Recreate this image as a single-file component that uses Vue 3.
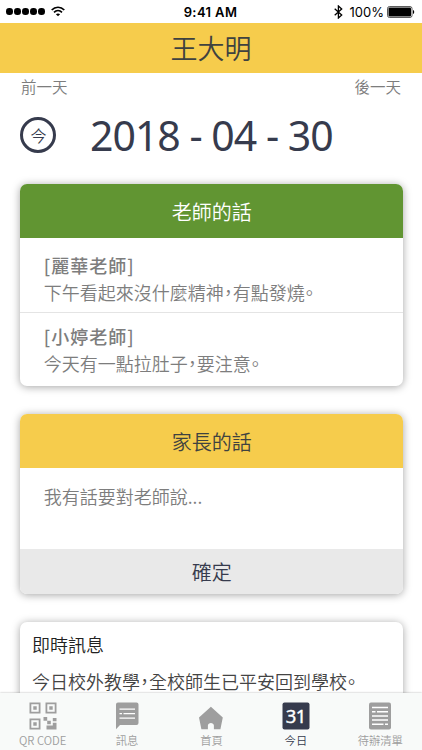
<script setup>
import { ref } from 'vue'

const aluno = '王大明'
const hoje = ref('2018 - 04 - 30')
const mensagem = ref('')
const abaAtiva = ref('today')

const recados = [
  { id: 1, autor: '[麗華老師]', texto: '下午看起來沒什麼精神\uFF0C有點發燒。' },
  { id: 2, autor: '[小婷老師]', texto: '今天有一點拉肚子\uFF0C要注意。' }
]

const noticia = '今日校外教學\uFF0C全校師生已平安回到學校。'

const abas = [
  { id: 'qr', nome: 'QR CODE' },
  { id: 'message', nome: '訊息' },
  { id: 'home', nome: '首頁' },
  { id: 'today', nome: '今日' },
  { id: 'todo', nome: '待辦清單' }
]
</script>

<template>
  <div class="app">
    <div class="status">
      <div class="sinal">
        <i v-for="n in 5" :key="n" class="ponto"></i>
        <svg class="wifi" width="14" height="11" viewBox="0 0 14 11" fill="none" stroke="#000" stroke-width="1.7">
          <path d="M.7 4C4.2.3 9.8.3 13.3 4" />
          <path d="M3 6.3c2.3-2.2 5.7-2.2 8 0" />
          <path d="M7 10.3 4.9 8.2c1.2-1.1 3-1.1 4.2 0Z" fill="#000" stroke="none" />
        </svg>
      </div>
      <span class="hora">9:41 AM</span>
      <div class="bateria">
        <svg class="bluetooth" width="9" height="14" viewBox="0 0 9 14" fill="none" stroke="#000" stroke-width="1.3">
          <path d="M.7 3.8 7.7 10 4.4 13V1L7.7 4 .7 10.2" />
        </svg>
        <span class="carga">100%</span>
        <svg width="28" height="12" viewBox="0 0 28 12">
          <rect x=".5" y=".5" width="24.5" height="11" rx="2" fill="#fff" stroke="#333" stroke-width=".8" />
          <rect x="1.5" y="1.5" width="22.5" height="9" rx="1" />
          <path d="M26 4c1.6.4 1.6 3.6 0 4Z" />
        </svg>
      </div>
    </div>

    <header class="topo">{{ aluno }}</header>

    <main class="conteudo">
      <div class="dias">
        <span>前一天</span>
        <span>後一天</span>
      </div>
      <div class="data">
        <button class="botaoHoje">今</button>
        <span class="dataTexto">{{ hoje }}</span>
      </div>

      <section class="card">
        <h2 class="titulo verde">老師的話</h2>
        <div v-for="item in recados" :key="item.id" class="recado">
          <h5 class="autor">{{ item.autor }}</h5>
          <p class="texto">{{ item.texto }}</p>
        </div>
      </section>

      <section class="card">
        <h2 class="titulo amarelo">家長的話</h2>
        <textarea v-model="mensagem" class="campo" placeholder="我有話要對老師說..."></textarea>
        <button class="confirmar">確定</button>
      </section>

      <section class="card noticias">
        <h3 class="noticiaTitulo">即時訊息</h3>
        <p class="noticiaTexto">{{ noticia }}</p>
      </section>
    </main>

    <nav class="menu">
      <a v-for="aba in abas" :key="aba.id" class="aba" :class="{ ativa: aba.id === abaAtiva }">
        <svg v-if="aba.id === 'qr'" width="28" height="28" viewBox="0 0 28 28" fill="currentColor">
          <path fill-rule="evenodd" d="M.5.5h11v11H.5ZM2.3 2.3v7.4h7.4V2.3ZM16.5.5h11v11h-11ZM18.3 2.3v7.4h7.4V2.3ZM.5 16.5h11v11H.5ZM2.3 18.3v7.4h7.4v-7.4Z" />
          <path d="M4.3 4.3h3.4v3.4H4.3ZM20.3 4.3h3.4v3.4h-3.4ZM4.3 20.3h3.4v3.4H4.3ZM14.5 15h3.7v3.7h-3.7ZM18.2 18.7h3.6v3.6h-3.6ZM23.8 16h3.7v3.2h-3.7ZM23.8 20.7h3.7v6.8h-10v-4h6.3Z" />
        </svg>
        <svg v-else-if="aba.id === 'message'" width="28" height="28" viewBox="0 0 28 28">
          <path fill="currentColor" d="M5 .5h18.500a2 2 0 0 1 2 2V21a2 2 0 0 1-2 2H7L3 27.200V2.500a2 2 0 0 1 2-2Z" />
          <path d="M6.500 7.200H22M6.500 11.700H9M10.500 11.700H22M6.500 16.200H22" stroke="#fff" stroke-width="1.300" />
        </svg>
        <svg v-else-if="aba.id === 'home'" width="28" height="28" viewBox="0 0 28 28" fill="currentColor">
          <path d="M12.900 4.800 24.800 15.500 22.400 27.300h-6.500v-3.800c0-3.500-6-3.500-6 0v3.800H3.400L1 15.500Z" />
        </svg>
        <svg v-else-if="aba.id === 'today'" width="28" height="28" viewBox="0 0 28 28">
          <rect x=".5" y=".5" width="27" height="27" rx="2" fill="currentColor" />
          <text x="13.700" y="20.800" text-anchor="middle" class="numero">31</text>
        </svg>
        <svg v-else width="28" height="28" viewBox="0 0 28 28">
          <rect x="3" y=".5" width="22" height="27" rx="2" fill="currentColor" />
          <path d="M6 5.500h16M6 9.700h3.500M11 9.700h11M6 13.900h16M6 18.100h16M6 22.300h11.500M19 22.300h3" stroke="#fff" stroke-width="1.500" />
        </svg>
        <span class="rotulo">{{ aba.nome }}</span>
      </a>
    </nav>
  </div>
</template>

<style>
body {
  background: #fff;
}
</style>

<style scoped>
.app {
  display: flex;
  flex-direction: column;
  height: 750px;
  overflow: hidden;
  font-family: "Noto Sans CJK TC", sans-serif;
  font-weight: 350;
  color: #7d7d7d;
}

/* Barra de status */
.status {
  display: grid;
  grid-template-columns: 1fr auto 1fr;
  align-items: center;
  flex: none;
  height: 23px;
  padding: 0 7px 0 6px;
  box-sizing: border-box;
  font-family: Inter, sans-serif;
  color: #000;
}

.sinal,
.bateria {
  display: flex;
  align-items: center;
}

.ponto {
  width: 6.5px;
  height: 6.5px;
  margin-right: 1.5px;
  border-radius: 50%;
  background: #000;
}

.wifi {
  margin-left: 5px;
}

.hora {
  font-size: 13px;
  font-weight: 600;
  letter-spacing: 0.4px;
}

.bateria {
  justify-content: flex-end;
}

.carga {
  margin: 0 3px 0 7px;
  font-size: 13px;
  font-weight: 400;
}

.topo {
  flex: none;
  height: 50px;
  line-height: 49px;
  background: #f6cc4c;
  color: #3f4240;
  font-size: 27px;
  text-align: center;
}

.conteudo {
  flex: 1;
  min-height: 0;
  overflow: hidden;
  padding: 0 19px 0 20.4px;
}

.dias {
  display: flex;
  justify-content: space-between;
  height: 27px;
  padding: 0 2px 0 0.6px;
  line-height: 27px;
  font-size: 15.5px;
}

/* Data selecionada */
.data {
  display: flex;
  align-items: center;
  height: 70px;
  margin-bottom: 13.5px;
}

.botaoHoje {
  width: 36px;
  height: 36px;
  padding: 0;
  border: 3px solid #363b4d;
  border-radius: 50%;
  background: none;
  color: #363b4d;
  font-family: inherit;
  font-size: 16px;
  font-weight: inherit;
  line-height: 28px;
}

.dataTexto {
  margin-left: 33.6px;
  font-family: "Noto Sans", sans-serif;
  font-size: 41px;
  font-weight: 400;
  line-height: 70px;
  letter-spacing: -1px;
  white-space: nowrap;
  color: #363b4d;
}

.card {
  margin-bottom: 28px;
  overflow: hidden;
  border-radius: 7px;
  background: #fff;
  box-shadow: 0 1px 9px rgba(0, 0, 0, 0.36);
}

.titulo {
  height: 54px;
  margin: 0;
  font-size: 20px;
  font-weight: inherit;
  line-height: 55px;
  text-align: center;
}

.verde {
  background: #619532;
  color: #fff;
}

.amarelo {
  background: #f6cc4c;
  color: #3f4240;
}

.recado {
  height: 74px;
  padding: 14px 23.4px 0;
  box-sizing: border-box;
}

.recado + .recado {
  height: 74.5px;
  border-top: 1px solid #e4e4e4;
  padding-top: 10px;
}

.autor {
  margin: 0;
  font-size: 18px;
  font-weight: 500;
  line-height: 27px;
  letter-spacing: 1px;
}

.texto,
.noticiaTexto {
  margin: 0;
  font-size: 18px;
  line-height: 27px;
  font-feature-settings: "halt";
  white-space: nowrap;
}

.campo {
  display: block;
  width: 100%;
  height: 81px;
  padding: 15px 23.4px;
  box-sizing: border-box;
  border: 0;
  resize: none;
  font-family: inherit;
  font-size: 18px;
  font-weight: inherit;
  line-height: 27px;
}

.campo::placeholder {
  color: #7d7d7d;
}

.confirmar {
  display: block;
  width: 100%;
  height: 45px;
  padding: 0;
  border: 0;
  background: #e9e9e9;
  color: #363b4d;
  font-family: inherit;
  font-size: 20px;
  font-weight: inherit;
  line-height: 45px;
}

.noticias {
  padding: 9px 11.5px 40px;
}

.noticiaTitulo {
  margin: 0 0 10px;
  color: #222;
  font-size: 18px;
  font-weight: inherit;
  line-height: 27px;
}

.noticiaTexto {
  color: #444;
}

/* Menu inferior */
.menu {
  position: relative;
  display: flex;
  flex: none;
  height: 57px;
  box-sizing: border-box;
  background: #f8faf9;
  box-shadow: 0 0 2px rgba(0, 0, 0, 0.3);
}

.aba {
  display: flex;
  flex: 1;
  flex-direction: column;
  align-items: center;
  padding: 9px 0 0 1px;
  color: #9e9e9e;
}

.ativa {
  color: #363b4d;
}

.rotulo {
  margin-top: 1px;
  font-size: 11.3px;
  line-height: 19px;
  white-space: nowrap;
}

.numero {
  fill: #fff;
  stroke: #fff;
  stroke-width: 0.4px;
  font-family: "Noto Sans", sans-serif;
  font-size: 18.5px;
  font-weight: 400;
  letter-spacing: -0.6px;
}
</style>
